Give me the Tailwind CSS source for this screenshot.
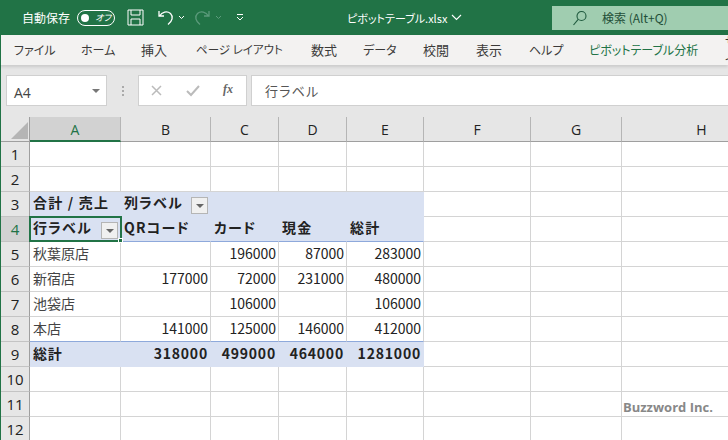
<!DOCTYPE html>
<html lang="ja">
<head>
<meta charset="UTF-8">
<title>ピボットテーブル.xlsx</title>
<script src="https://cdn.jsdelivr.net/npm/@tailwindcss/browser@4"></script>
</head>
<body class="w-[728px] h-[440px] overflow-hidden bg-white font-['Noto_Sans_CJK_JP','Noto_Sans',sans-serif] text-[#222] [font-feature-settings:'palt']">

<!-- title bar -->
<header class="h-[35px] bg-[#217346] flex items-center text-white text-[12px] relative">
  <span class="ml-[22px]">自動保存</span>
  <div class="ml-[7px] w-[38px] h-[16px] rounded-full border border-white flex items-center justify-between px-[3px]">
    <span class="w-[8px] h-[8px] rounded-full bg-white"></span>
    <span class="text-[9px] italic leading-none">オフ</span>
  </div>
  <svg class="ml-[12px]" width="17" height="17" viewBox="0 0 17 17" fill="none" stroke="white" stroke-width="1"><path d="M1 1h15v15H1zM4 1v5h9V1M4 16v-6h9v6"/></svg>
  <svg class="ml-[13px]" width="17" height="17" viewBox="0 0 17 17" fill="none" stroke="white" stroke-width="1.3"><path d="M2 2v5h5M2.500 7C5 3 10 1.500 13.500 4.500c3 3 2 7.500-2.500 11"/></svg>
  <svg class="ml-[4px]" width="7" height="5" viewBox="0 0 7 5" fill="none" stroke="white"><path d="M1 1l2.500 2.500L6 1"/></svg>
  <svg class="ml-[9px]" width="17" height="17" viewBox="0 0 17 17" fill="none" stroke="#5c9b7c" stroke-width="1.300"><path d="M15 2v5h-5M14.500 7C12 3 7 1.500 3.500 4.500c-3 3-2 7.500 2.500 11"/></svg>
  <svg class="ml-[4px]" width="7" height="5" viewBox="0 0 7 5" fill="none" stroke="#5c9b7c"><path d="M1 1l2.500 2.500L6 1"/></svg>
  <svg class="ml-[14px]" width="8" height="7" viewBox="0 0 8 7" fill="none" stroke="white"><path d="M1 .5h6M1 3l3 3 3-3"/></svg>
  <span class="absolute left-[347px] top-[9px] leading-[18px] text-[11px]">ピボットテーブル.xlsx</span>
  <svg class="absolute left-[451px] top-[14px]" width="11" height="7" viewBox="0 0 11 7" fill="none" stroke="white" stroke-width="1.100"><path d="M1 1l4.500 4.500L10 1"/></svg>
  <div class="absolute left-[552px] top-[6px] w-[176px] h-[24px] bg-[#a0cdb0] flex items-center text-[#1f4f38]">
    <svg class="ml-[20px]" width="16" height="16" viewBox="0 0 16 16" fill="none" stroke="#1f5a3e" stroke-width="1.100"><circle cx="9.500" cy="6" r="4.500"/><path d="M6.200 9.300L1.500 15"/></svg>
    <span class="ml-[14px]">検索 (Alt+Q)</span>
  </div>
</header>

<!-- ribbon tabs -->
<nav class="h-[30px] bg-[#f3f2f1] border-l border-[#217346] text-[12px] text-[#3b3a39] flex items-center relative shadow-[0_2px_3px_rgba(0,0,0,0.12)] overflow-hidden">
  <span class="absolute left-[13px]">ファイル</span>
  <span class="absolute left-[80px]">ホーム</span>
  <span class="absolute left-[140px] text-[13px]">挿入</span>
  <span class="absolute left-[195px] text-[11.5px]">ページ レイアウト</span>
  <span class="absolute left-[310px] text-[13px]">数式</span>
  <span class="absolute left-[362px]">データ</span>
  <span class="absolute left-[422px] text-[13px]">校閲</span>
  <span class="absolute left-[475px] text-[13px]">表示</span>
  <span class="absolute left-[528px]">ヘルプ</span>
  <span class="absolute left-[588px] text-[#217346]">ピボットテーブル分析</span>
  <span class="absolute left-[724px]">デザイン</span>
</nav>

<!-- formula bar -->
<section class="h-[52px] bg-[#e6e6e6] border-l border-[#217346] flex items-start pt-[10px] pl-[5px]">
  <div class="w-[101px] h-[31px] bg-white border border-[#d0d0d0] flex items-center justify-between pl-[7px] pr-[6px] pt-[3px] text-[14px] text-[#444] font-['Open_Sans',sans-serif]">
    A4
    <span class="w-0 h-0 border-x-[4px] border-x-transparent border-t-[4px] border-t-[#777] -mt-[3px]"></span>
  </div>
  <div class="w-[31px] h-[31px] flex flex-col items-center justify-center gap-[2px]">
    <span class="w-[2px] h-[2px] bg-[#aaa]"></span>
    <span class="w-[2px] h-[2px] bg-[#aaa]"></span>
    <span class="w-[2px] h-[2px] bg-[#aaa]"></span>
  </div>
  <div class="w-[109px] h-[31px] bg-white border border-[#d0d0d0] flex items-center relative">
    <svg class="absolute left-[12px] top-[9px]" width="11" height="11" viewBox="0 0 11 11" fill="none" stroke="#bbb" stroke-width="1.500"><path d="M1 1l9 9M10 1l-9 9"/></svg>
    <svg class="absolute left-[47px] top-[9px]" width="14" height="12" viewBox="0 0 14 12" fill="none" stroke="#bbb" stroke-width="2"><path d="M1 6l4 4 8-9"/></svg>
    <span class="absolute left-[84px] top-[4px] text-[12px] font-bold italic text-[#666] font-['Liberation_Serif',serif]">fx</span>
  </div>
  <div class="ml-[4px] flex-1 h-[31px] bg-white border border-[#d0d0d0] border-r-0 flex items-center pl-[13px] text-[13px] tracking-[1.2px] text-[#555]">行ラベル</div>
</section>

<!-- sheet -->
<main id="sheet" class="grid border-l border-[#217346] relative w-[888px] grid-cols-[29px_91px_90px_68px_68px_77px_107px_91px_160px] auto-rows-[25px] text-[14px]"></main>

<script>
  // pivot table contents, one array per row, columns A to E
  const data = {
    3: ['合計 / 売上', '列ラベル'],
    4: ['行ラベル', 'QRコード', 'カード', '現金', '総計'],
    5: ['秋葉原店', '', '196000', '87000', '283000'],
    6: ['新宿店', '177000', '72000', '231000', '480000'],
    7: ['池袋店', '', '106000', '', '106000'],
    8: ['本店', '141000', '125000', '146000', '412000'],
    9: ['総計', '318000', '499000', '464000', '1281000'],
  };
  const letters = ['A', 'B', 'C', 'D', 'E', 'F', 'G', 'H'];
  const filterBtn = '<span class="absolute right-[2px] top-[5px] w-[17px] h-[17px] bg-[#f0f0f0] border border-[#b5b5b5] flex items-center justify-center"><span class="w-0 h-0 border-x-[4px] border-x-transparent border-t-[4px] border-t-[#666]"></span></span>';
  let html = '<div class="bg-[#e6e6e6] border-r border-b border-[#9f9f9f] relative overflow-hidden"><span class="absolute right-[1px] bottom-[2px] w-0 h-0 border-l-[17px] border-l-transparent border-b-[17px] border-b-[#b5b5b5]"></span></div>';

  letters.forEach((l, i) => {
    const cls = i === 0
      ? 'bg-[#d2d2d2] text-[#217346] border-b-2 border-b-[#217346]'
      : 'bg-[#e6e6e6] border-b border-b-[#9f9f9f]';
    html += `<div class="${cls} border-r border-r-[#b5b5b5] text-center leading-[25px] font-['Open_Sans',sans-serif] text-[14px]">${l}</div>`;
  });

  for (let r = 1; r <= 12; r++) {
    const rowCls = r === 4 ? 'bg-[#d2d2d2] text-[#217346]' : 'bg-[#e6e6e6]';
    html += `<div class="${rowCls} border-r border-r-[#9f9f9f] border-b border-b-[#c4c4c4] text-center leading-[24px] font-['Open_Sans',sans-serif] text-[15px]">${r}</div>`;
    for (let c = 0; c < 8; c++) {
      const val = data[r] && data[r][c] ? data[r][c] : '';
      const inPivot = r >= 3 && r <= 9 && c <= 4;
      let cls = 'border-r border-b border-[#d4d4d4] relative whitespace-nowrap ';
      cls += r === 3 || r === 4 ? 'leading-[21px] ' : 'leading-[22px] ';
      cls += inPivot && r >= 5 && c >= 1 ? 'pr-[2px] text-right ' : 'px-[3px] ';
      if (inPivot && (r === 3 || r === 4)) cls += 'bg-[#d9e1f2] font-bold tracking-[1.2px] border-r-[#d9e1f2] ';
      if (inPivot && r === 3) cls += 'border-b-[#d9e1f2] ';
      if (inPivot && r === 4) cls += 'border-b-[#8ea9db] ';
      if (inPivot && r === 8) cls += 'border-b-[#8ea9db] ';
      if (inPivot && r === 9) cls += 'bg-[#d9e1f2] font-bold tracking-[0.8px] border-r-[#d9e1f2] border-b-[#d9e1f2] ';
      if (r >= 5 && r <= 8 && c === 0) cls += 'text-[#444] ';
      let inner = val;
      if ((r === 3 && c === 1) || (r === 4 && c === 0)) inner += filterBtn;
      if (r === 11 && c === 7) inner = '<span class="block -ml-[2px] mt-[4px] text-[13px] font-bold text-[#888] font-[\'Open_Sans\',sans-serif]">Buzzword Inc.</span>';
      html += `<div class="${cls}">${inner}</div>`;
    }
  }
  // selection border on A4 with its fill handle
  html += '<div class="absolute left-[28px] top-[99px] w-[93px] h-[26px] border-2 border-[#217346] pointer-events-none"><span class="absolute -right-[3px] -bottom-[3px] w-[5px] h-[5px] bg-[#217346] border border-white"></span></div>';
  document.getElementById('sheet').innerHTML = html;
</script>
</body>
</html>
